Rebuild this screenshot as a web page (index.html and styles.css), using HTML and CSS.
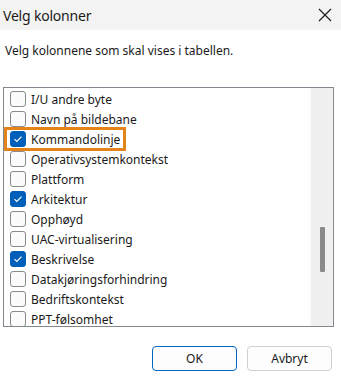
FILE: index.html
```html
<!DOCTYPE html>
<html>
<head>
  <title>Velg kolonner</title>
  <link rel="stylesheet" href="styles.css">
</head>
<body>
  <div class="titlebar">
    <span class="title">Velg kolonner</span>
    <svg class="close" width="14" height="14" viewBox="0 0 14 14">
      <path d="M1 1 L13 13 M13 1 L1 13" stroke="#1a1a1a" stroke-width="1.2" fill="none"/>
    </svg>
  </div>

  <p class="intro">Velg kolonnene som skal vises i tabellen.</p>

  <div class="listbox">
    <div class="items">
      <div class="row"><span class="box"></span>I/U andre byte</div>
      <div class="row"><span class="box"></span>Navn på bildebane</div>
      <div class="row highlight"><span class="box checked"></span>Kommandolinje</div>
      <div class="row"><span class="box"></span>Operativsystemkontekst</div>
      <div class="row"><span class="box"></span>Plattform</div>
      <div class="row"><span class="box checked"></span>Arkitektur</div>
      <div class="row"><span class="box"></span>Opphøyd</div>
      <div class="row"><span class="box"></span>UAC-virtualisering</div>
      <div class="row"><span class="box checked"></span>Beskrivelse</div>
      <div class="row"><span class="box"></span>Datakjøringsforhindring</div>
      <div class="row"><span class="box"></span>Bedriftskontekst</div>
      <div class="row"><span class="box"></span>PPT-følsomhet</div>
    </div>
    <div class="scrollbar">
      <div class="thumb"></div>
    </div>
  </div>

  <div class="buttons">
    <button class="btn primary">OK</button>
    <button class="btn">Avbryt</button>
  </div>
</body>
</html>
```

FILE: styles.css
```css
body {
  margin: 0;
  font-family: "Noto Sans", "Open Sans", sans-serif;
  font-size: 12px;
  color: #1a1a1a;
  background: #ffffff;
  width: 341px;
  height: 380px;
  overflow: hidden;
}
.titlebar {
  height: 30px;
  background: #f3f3f3;
  display: flex;
  align-items: center;
  justify-content: space-between;
  padding: 0 9px 0 3px;
}
.title {
  font-size: 14px;
  letter-spacing: -0.2px;
  color: #1a1a1a;
}
.intro {
  margin: 12px 0 0 5px;
  line-height: 17px;
  height: 17px;
}
.listbox {
  margin: 28px 0 0 3px;
  width: 329px;
  height: 238px;
  border: 1px solid #828790;
  display: flex;
  overflow: hidden;
}
.items {
  flex: 1;
  padding-top: 1px;
}
.row {
  position: relative;
  height: 20px;
  display: flex;
  align-items: center;
  padding-left: 6px;
}
.box {
  width: 14px;
  height: 14px;
  border: 1px solid #8a8a8a;
  border-radius: 3px;
  background: #fbfbfb;
  margin-right: 5px;
  flex: none;
}
.box.checked {
  background: #005fb8;
  border-color: #005fb8;
  background-image: url("data:image/svg+xml,%3Csvg xmlns='http://www.w3.org/2000/svg' width='14' height='14' viewBox='0 0 14 14'%3E%3Cpath d='M3.5 7.2 L5.8 9.5 L10.5 4.6' stroke='white' stroke-width='1.2' fill='none'/%3E%3C/svg%3E");
}
.highlight::after {
  content: "";
  position: absolute;
  left: 0;
  top: -2px;
  width: 116px;
  height: 18px;
  border: 3px solid #e3831a;
}
.scrollbar {
  width: 22px;
  background: #f0f0f0;
  border-left: 1px solid #fafafa;
  display: flex;
  justify-content: center;
}
.thumb {
  width: 5px;
  height: 45px;
  margin-top: 139px;
  background: #8a8a8a;
  border-radius: 1px;
}
.buttons {
  display: flex;
  justify-content: flex-end;
  gap: 10px;
  margin-top: 19px;
  padding-right: 9px;
}
.btn {
  width: 85px;
  height: 25px;
  font-family: inherit;
  font-size: 12px;
  color: #1a1a1a;
  background: #fdfdfd;
  border: 1px solid #d0d0d0;
  border-radius: 4px;
}
.btn.primary {
  border-color: #0067c0;
}
```
